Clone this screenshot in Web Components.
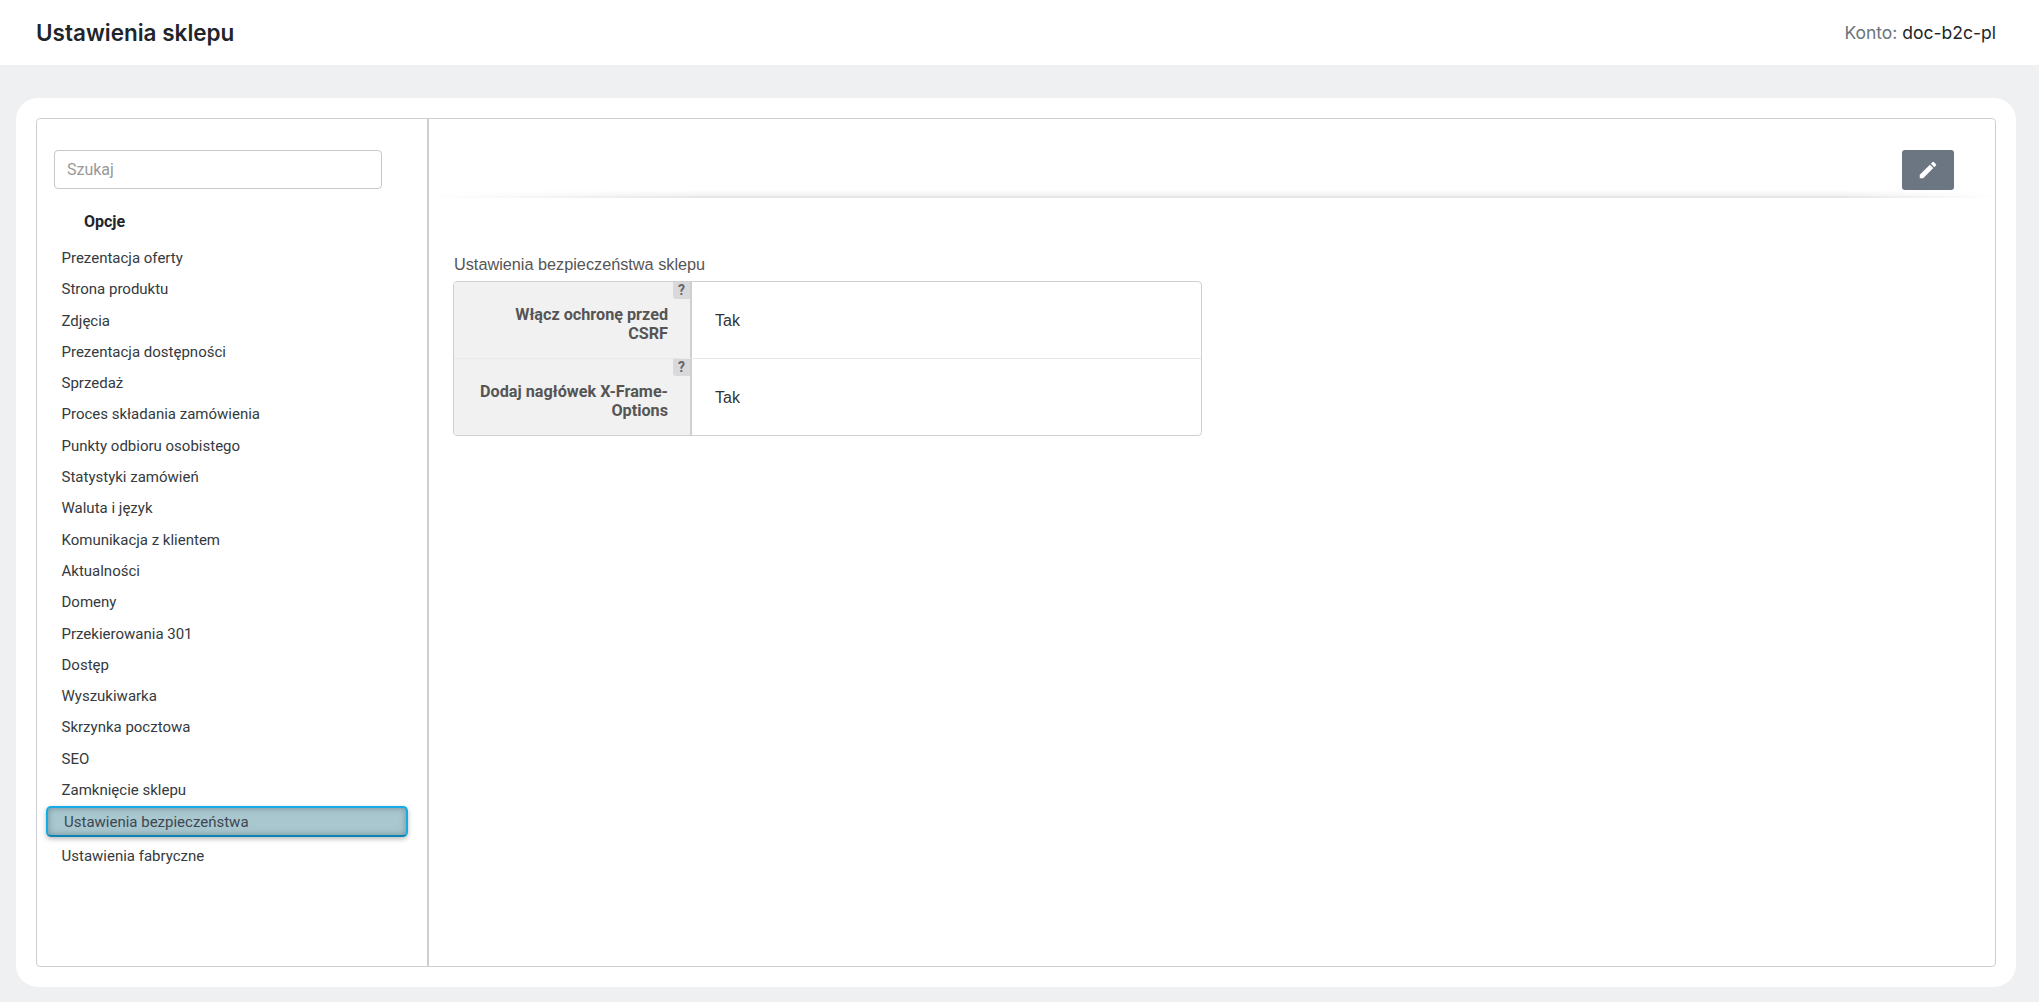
<!DOCTYPE html>
<html lang="pl">
<head>
<meta charset="utf-8">
<title>Ustawienia sklepu</title>
<style>
  html, body { margin: 0; height: 100%; background: #eff0f2; }
  body { font-family: Roboto, sans-serif; overflow: hidden; }
</style>
</head>
<body>
<shop-header title="Ustawienia sklepu" account="doc-b2c-pl"></shop-header>
<shop-layout>
  <shop-sidebar slot="aside" heading="Opcje">
    <side-item>Prezentacja oferty</side-item>
    <side-item>Strona produktu</side-item>
    <side-item>Zdjęcia</side-item>
    <side-item>Prezentacja dostępności</side-item>
    <side-item>Sprzedaż</side-item>
    <side-item>Proces składania zamówienia</side-item>
    <side-item>Punkty odbioru osobistego</side-item>
    <side-item>Statystyki zamówień</side-item>
    <side-item>Waluta i język</side-item>
    <side-item>Komunikacja z klientem</side-item>
    <side-item>Aktualności</side-item>
    <side-item>Domeny</side-item>
    <side-item>Przekierowania 301</side-item>
    <side-item>Dostęp</side-item>
    <side-item>Wyszukiwarka</side-item>
    <side-item>Skrzynka pocztowa</side-item>
    <side-item>SEO</side-item>
    <side-item>Zamknięcie sklepu</side-item>
    <side-item active>Ustawienia bezpieczeństwa</side-item>
    <side-item>Ustawienia fabryczne</side-item>
  </shop-sidebar>
  <edit-toolbar></edit-toolbar>
  <settings-table heading="Ustawienia bezpieczeństwa sklepu">
    <settings-row label="Włącz ochronę przed CSRF">Tak</settings-row>
    <settings-row label="Dodaj nagłówek X-Frame-Options">Tak</settings-row>
  </settings-table>
</shop-layout>

<script>
/* top white bar: page title on the left, account on the right */
class ShopHeader extends HTMLElement {
  connectedCallback() {
    const root = this.attachShadow({ mode: 'open' });
    root.innerHTML = `
      <style>
        :host { display: flex; align-items: center; justify-content: space-between;
                height: 65px; background: #fff; padding: 0 43px 0 36px; font-family: Inter, sans-serif; }
        h1 { margin: 0; font-size: 22.5px; font-weight: 600; color: #212529; }
        .acc { font-size: 17.5px; color: #6c757d; margin-top: -1px; }
        .acc b { font-weight: 400; color: #212529; }
      </style>
      <h1></h1>
      <div class="acc">Konto: <b></b></div>`;
    root.querySelector('h1').textContent = this.getAttribute('title');
    root.querySelector('b').textContent = this.getAttribute('account');
  }
}

/* rounded white card holding the bordered two column panel */
class ShopLayout extends HTMLElement {
  constructor() {
    super();
    this.attachShadow({ mode: 'open' }).innerHTML = `
      <style>
        :host { display: block; margin: 33px 23px 16px 16px; background: #fff; border-radius: 22px; padding: 20px; }
        .panel { display: flex; height: 847px; border: 1px solid #cfcfcf; border-radius: 4px; }
        aside { width: 390px; flex: none; border-right: 2px solid #cfcfcf; }
        main { flex: 1; min-width: 0; }
      </style>
      <div class="panel">
        <aside><slot name="aside"></slot></aside>
        <main><slot></slot></main>
      </div>`;
  }
}

class ShopSidebar extends HTMLElement {
  connectedCallback() {
    const root = this.attachShadow({ mode: 'open' });
    root.innerHTML = `
      <style>
        :host { display: block; padding: 31px 0 0 17px; }
        input { display: block; box-sizing: border-box; width: 328px; height: 39px; padding: 0 12px;
                border: 1px solid #c8c8c8; border-radius: 4px; font: 16px Roboto, sans-serif; color: #333; outline: none; }
        input::placeholder { color: #999; opacity: 1; }
        h4 { margin: 0; padding: 24px 0 0 30px; height: 30px; font-size: 16px; line-height: 18px; font-weight: 700; color: #212529; }
        .list { display: flex; flex-direction: column; width: 362px; margin-left: -8px; }
      </style>
      <input type="text" placeholder="Szukaj">
      <h4></h4>
      <div class="list"><slot></slot></div>`;
    root.querySelector('h4').textContent = this.getAttribute('heading');
  }
}

class SideItem extends HTMLElement {
  constructor() {
    super();
    this.attachShadow({ mode: 'open' }).innerHTML = `
      <style>
        :host { display: block; box-sizing: border-box; height: 31.3px; line-height: 31.3px;
                padding-left: 15.5px; font-size: 15px; color: #343a40; }
        :host([active]) { height: 31px; line-height: 28px; margin: 0 0 4px; padding-left: 16px; color: #3d4650;
                background: #a9c7cf; border: 2px solid #14ace6; border-bottom-color: #0b86b4; border-radius: 5px;
                box-shadow: inset 0 0 6px rgba(70,90,100,.55), 0 2px 5px rgba(0,0,0,.28); }
      </style>
      <slot></slot>`;
  }
}

/* strip over the content with the edit button, fading line under it */
class EditToolbar extends HTMLElement {
  constructor() {
    super();
    this.attachShadow({ mode: 'open' }).innerHTML = `
      <style>
        :host { display: flex; justify-content: flex-end; height: 40px; padding: 31px 41px 0 0; position: relative; }
        .btn { width: 52px; height: 40px; border: 0; border-radius: 3px; background: #6c7683; padding: 0;
               display: flex; align-items: center; justify-content: center; }
        svg { width: 22px; height: 22px; fill: #fff; display: block; }
        .line { position: absolute; left: 0; right: 0; bottom: -8px; height: 8px;
                background: linear-gradient(90deg, #fff 0, #e6e6e6 18%, #e6e6e6 90%, #fff 100%);
                -webkit-mask-image: linear-gradient(180deg, transparent 0, rgba(0,0,0,.55) 70%, #000 75%); }
      </style>
      <button class="btn" type="button" aria-label="Edytuj">
        <svg viewBox="0 0 24 24"><path d="M3 17.25V21h3.75L17.81 9.94l-3.75-3.75L3 17.25zM20.71 7.04a1 1 0 0 0 0-1.41l-2.34-2.34a1 1 0 0 0-1.41 0l-1.83 1.83 3.75 3.75 1.83-1.83z"/></svg>
      </button>
      <div class="line"></div>`;
  }
}

class SettingsTable extends HTMLElement {
  connectedCallback() {
    const root = this.attachShadow({ mode: 'open' });
    root.innerHTML = `
      <style>
        :host { display: block; padding: 64px 0 0 24px; }
        h3 { margin: 0 0 7px 1px; font: 400 16.25px/20px "Liberation Sans", Arial, sans-serif; color: #555; }
        .tbl { width: 749px; box-sizing: border-box; border: 1px solid #cfcfcf; border-radius: 4px; overflow: hidden; }
      </style>
      <h3></h3>
      <div class="tbl"><slot></slot></div>`;
    root.querySelector('h3').textContent = this.getAttribute('heading');
  }
}

class SettingsRow extends HTMLElement {
  connectedCallback() {
    const root = this.attachShadow({ mode: 'open' });
    root.innerHTML = `
      <style>
        :host { display: grid; grid-template-columns: 238px 1fr; height: 76px; border-top: 1px solid #e8e8e8; }
        :host(:first-child) { border-top: 0; }
        .lab { position: relative; display: flex; align-items: center; justify-content: flex-end; text-align: right;
               box-sizing: border-box; padding: 7px 22px 0 20px; background: #f1f1f1; border-right: 2px solid #cfcfcf;
               font-weight: 700; font-size: 16.2px; line-height: 19px; color: #555; }
        .tip { position: absolute; top: 0; right: 0; width: 17px; height: 17px; border-bottom-left-radius: 3px;
               background: #d9d9dc; color: #666; font: 700 14px/17px Roboto, sans-serif; text-align: center; }
        .val { display: flex; align-items: center; padding: 2px 0 0 23px; font: 16px "Liberation Sans", Arial, sans-serif; color: #333; }
      </style>
      <div class="lab"><span class="tip">?</span><span class="txt"></span></div>
      <div class="val"><slot></slot></div>`;
    root.querySelector('.txt').textContent = this.getAttribute('label');
  }
}

customElements.define('shop-header', ShopHeader);
customElements.define('shop-layout', ShopLayout);
customElements.define('shop-sidebar', ShopSidebar);
customElements.define('side-item', SideItem);
customElements.define('edit-toolbar', EditToolbar);
customElements.define('settings-table', SettingsTable);
customElements.define('settings-row', SettingsRow);
</script>
</body>
</html>
